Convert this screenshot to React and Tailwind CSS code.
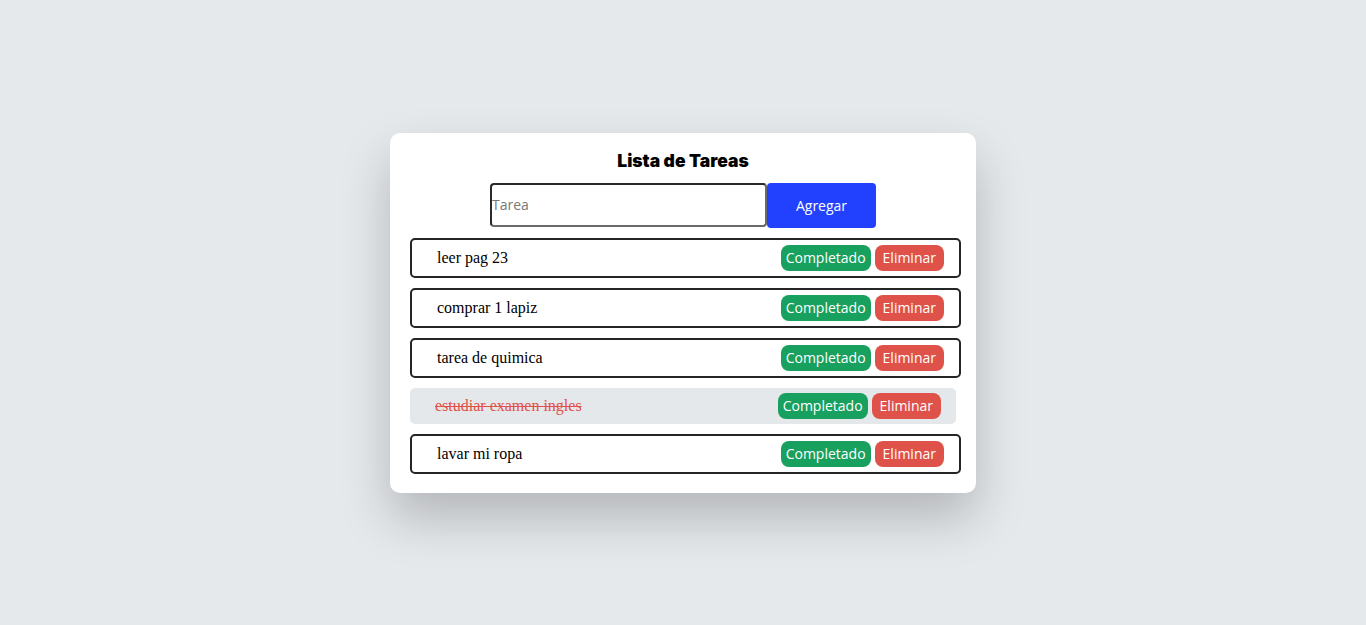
import { useState } from 'react';

const initialTasks = [
  { id: 1, text: 'leer pag 23', done: false },
  { id: 2, text: 'comprar 1 lapiz', done: false },
  { id: 3, text: 'tarea de quimica', done: false },
  { id: 4, text: 'estudiar examen ingles', done: true },
  { id: 5, text: 'lavar mi ropa', done: false },
];

const TaskItem = ({ task, onToggle, onDelete }) => {
  const base = 'flex items-center justify-between pl-[25px] pr-[15px] py-[5px] mb-[10px] rounded-[5px]';
  const style = task.done
    ? 'w-full bg-[#e5e8eb]'
    : 'w-[551px] border-2 border-[#252525] bg-white';

  return (
    <li className={`${base} ${style}`}>
      <span
        className={`text-[16px] font-['Liberation_Serif',serif] ${
          task.done ? 'text-[#e0514a] line-through' : 'text-black'
        }`}
      >
        {task.text}
      </span>
      <div className="flex gap-1 font-['Open_Sans',sans-serif] text-[14px] text-white">
        <button
          onClick={() => onToggle(task.id)}
          className="h-[26px] px-[5px] rounded-lg bg-[#18a05e] leading-none"
        >
          Completado
        </button>
        <button
          onClick={() => onDelete(task.id)}
          className="h-[26px] px-[8px] rounded-lg bg-[#df5249] leading-none"
        >
          Eliminar
        </button>
      </div>
    </li>
  );
};

const App = () => {
  const [tasks, setTasks] = useState(initialTasks);
  const [text, setText] = useState('');

  const addTask = () => {
    if (!text.trim()) return;
    setTasks(prev => [...prev, { id: Date.now(), text, done: false }]);
    setText('');
  };

  const toggle = (id) => setTasks(prev => prev.map(t => (t.id === id ? { ...t, done: !t.done } : t)));
  const remove = (id) => setTasks(prev => prev.filter(t => t.id !== id));

  return (
    <div className="min-h-screen bg-[#e6e9ec] flex items-center justify-center">
      <div className="w-[586px] bg-white rounded-[10px] px-5 pt-[18px] pb-[9px] shadow-[0_25px_50px_rgba(0,0,0,0.22)]">
        <h1 className="text-center text-[17.5px] leading-[20px] font-black font-['Inter',sans-serif] text-black">
          Lista de Tareas
        </h1>
        <div className="flex justify-center mt-[12px] mb-[10px]">
          <input
            type="text"
            value={text}
            onChange={e => setText(e.target.value)}
            placeholder="Tarea"
            className="w-[277px] h-[44px] px-0 text-[14px] font-['Open_Sans',sans-serif] rounded-[4px] border-2 border-t-[#2a2a2a] border-l-[#2a2a2a] border-r-[#6a6a6a] border-b-[#6a6a6a] placeholder:text-[#777] outline-none"
          />
          <button
            onClick={addTask}
            className="w-[109px] h-[45px] rounded-[4px] bg-[#2141ff] text-white text-[14px] font-['Open_Sans',sans-serif]"
          >
            Agregar
          </button>
        </div>
        <ul>
          {tasks.map(task => (
            <TaskItem key={task.id} task={task} onToggle={toggle} onDelete={remove} />
          ))}
        </ul>
      </div>
    </div>
  );
};

export default App;
